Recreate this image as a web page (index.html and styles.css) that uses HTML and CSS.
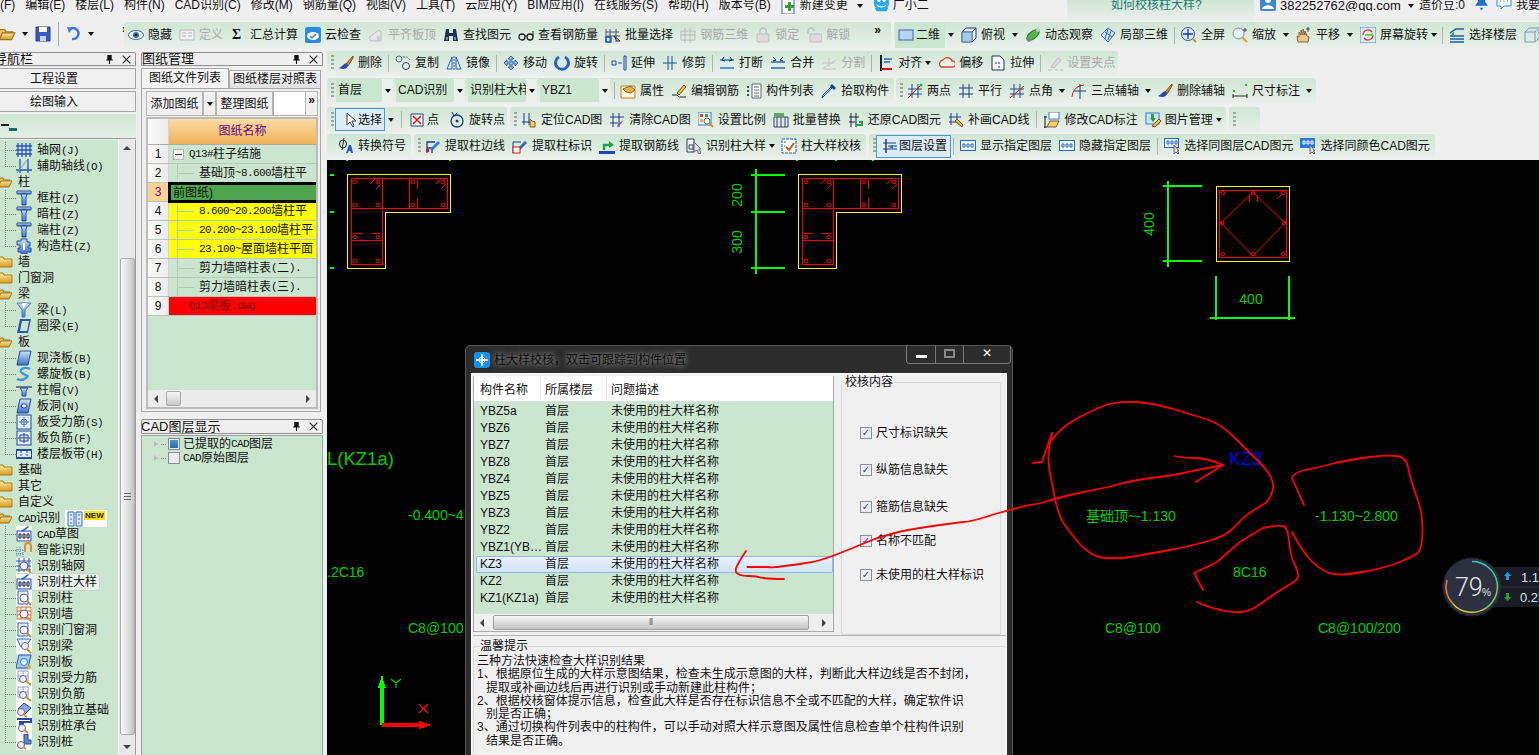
FILE: index.html
```html
<!DOCTYPE html>
<html lang="zh">
<head>
<meta charset="utf-8">
<title>柱大样校核</title>
<link rel="stylesheet" href="styles.css">
</head>
<body>
<svg class="defs" aria-hidden="true">
  <defs>
    <linearGradient id="gold" x1="0" y1="0" x2="0" y2="1"><stop offset="0" stop-color="#ffe9a8"/><stop offset="1" stop-color="#d79a22"/></linearGradient>
    <linearGradient id="steel" x1="0" y1="0" x2="0" y2="1"><stop offset="0" stop-color="#cfe0f8"/><stop offset="1" stop-color="#3c73c8"/></linearGradient>
  </defs>
  <symbol id="open" viewBox="0 0 16 16"><path d="M1 13V4h5l1 2h6v2" fill="#e8c060" stroke="#9a7420"/><path d="M1 13l3-6h11l-3 6z" fill="url(#gold)" stroke="#9a7420"/></symbol>
  <symbol id="shut" viewBox="0 0 16 16"><path d="M1 13V3h5l1 2h8v8z" fill="url(#gold)" stroke="#a87c20"/></symbol>
  <symbol id="save" viewBox="0 0 16 16"><path d="M1 1h14v14H1z" fill="#3a5cb8" stroke="#24408c"/><path d="M4 1h8v5H4z" fill="#fff"/><path d="M5 10h6v5H5z" fill="#c8d2e8"/></symbol>
  <symbol id="undo" viewBox="0 0 16 16"><path d="M4 3a5.500 5.500 0 1 1 2 10" fill="none" stroke="#3a78d8" stroke-width="2.500"/><path d="M1 1l6 1-4 5z" fill="#3a78d8"/></symbol>
  <symbol id="eye" viewBox="0 0 16 16"><ellipse cx="8" cy="8" rx="7.500" ry="4.500" fill="#eef2f6" stroke="#4a6078"/><circle cx="8" cy="8" r="3" fill="#3a6ea8"/><circle cx="8" cy="8" r="1.200" fill="#102030"/></symbol>
  <symbol id="def" viewBox="0 0 16 16"><path d="M1 3h14v10H1z" fill="#f0f0f0" stroke="#b8b8b8"/><path d="M3 6h4M3 9h4M9 6h4M9 9h4" stroke="#b8b8b8"/></symbol>
  <symbol id="cloud" viewBox="0 0 16 16"><rect x="0" y="0" width="16" height="16" rx="2" fill="#2a8ce0"/><ellipse cx="8" cy="9" rx="6" ry="4" fill="#fff"/><path d="M5 9l2 2 4-4" fill="none" stroke="#2a8ce0" stroke-width="1.500"/></symbol>
  <symbol id="level" viewBox="0 0 16 16"><path d="M1 10l10-7 2 2v9H3z" fill="#e4e4e4" stroke="#bcbcbc"/><path d="M9 9h5v5H9z" fill="#d0d0d0"/></symbol>
  <symbol id="binoc" viewBox="0 0 16 16"><path d="M3 2h3v4h4V2h3l2 12h-5V9H6v5H1z" fill="#1c3050"/><path d="M3 10h2v3H3zM11 10h2v3h-2z" fill="#6a90c0"/></symbol>
  <symbol id="glass" viewBox="0 0 16 16"><circle cx="4" cy="10" r="3" fill="none" stroke="#222" stroke-width="1.300"/><circle cx="12" cy="10" r="3" fill="none" stroke="#222" stroke-width="1.300"/><path d="M7 9h2M15 10V4" stroke="#222"/></symbol>
  <symbol id="batch" viewBox="0 0 16 16"><path d="M1 2v13M5 2v13M1 5h13M1 9h14M11 2v13" stroke="#556" fill="none"/><path d="M1 10h5v5H1z" fill="none" stroke="#1a48c8" stroke-width="1.300"/><path d="M9 9l6 5-3 0z" fill="#fff" stroke="#223"/></symbol>
  <symbol id="r3d" viewBox="0 0 16 16"><path d="M1 4h14v9H1zM5 1v15M10 1v15M1 8h14" stroke="#bcbcbc" fill="none"/></symbol>
  <symbol id="lock" viewBox="0 0 16 16"><path d="M5 7V4a3 3 0 0 1 6 0v3" fill="none" stroke="#c4c4c4" stroke-width="1.500"/><rect x="2" y="7" width="12" height="8" rx="1" fill="#dcdcdc" stroke="#c0c0c0"/></symbol>
  <symbol id="unlock" viewBox="0 0 16 16"><path d="M2 7V4a3 3 0 0 1 6 0" fill="none" stroke="#c4c4c4" stroke-width="1.500"/><rect x="4" y="7" width="12" height="8" rx="1" fill="#dcdcdc" stroke="#c0c0c0"/></symbol>
  <symbol id="plane" viewBox="0 0 16 16"><rect x="1" y="3" width="14" height="10" fill="#bcd4f4" stroke="#3a60a8"/></symbol>
  <symbol id="cube" viewBox="0 0 16 16"><path d="M1 5l4-4h10v10l-4 4H1z" fill="#dfeefa" stroke="#2a3a58"/><path d="M1 5h10v10M11 5l4-4" fill="none" stroke="#2a3a58"/><path d="M1 5h10v10H1z" fill="#6aa8d8" opacity=".5"/></symbol>
  <symbol id="orbit" viewBox="0 0 16 16"><ellipse cx="8" cy="8" rx="7.500" ry="3.500" transform="rotate(-38 8 8)" fill="#58b848" stroke="#2a7a28"/><circle cx="13" cy="3" r="2" fill="#c8c8d0"/><circle cx="4" cy="13" r="2" fill="#808890"/></symbol>
  <symbol id="part" viewBox="0 0 16 16"><path d="M1 8l7-7 7 5-7 9z" fill="#cfe2f8" stroke="#3a68b0"/><path d="M5 5l7 5M8 2l-3 10M11 4l-3 9" stroke="#3a68b0" fill="none"/></symbol>
  <symbol id="full" viewBox="0 0 16 16"><circle cx="7" cy="7" r="6.500" fill="#dbe6f6" stroke="#34507c"/><path d="M7 2v10M2 7h10" stroke="#1c3a90" stroke-width="1.300"/><path d="M12 12l3 3" stroke="#c89030" stroke-width="2"/></symbol>
  <symbol id="zoom" viewBox="0 0 16 16"><circle cx="6.500" cy="6.500" r="5.500" fill="#e8f0fa" stroke="#7a8aa0"/><path d="M10 10l5 5" stroke="#d8a040" stroke-width="2.200"/><path d="M13 1v4M11 3h4" stroke="#445"/></symbol>
  <symbol id="pan" viewBox="0 0 16 16"><path d="M2 15l-1-6 2 1V5l2 3V3l2 5V2l2 6V4l2 5 2 1-1 5z" fill="#e8c888" stroke="#806030"/><path d="M12 0v5M10 2h4" stroke="#445"/></symbol>
  <symbol id="turn" viewBox="0 0 16 16"><rect x="0" y="0" width="16" height="16" fill="#d8ecf8" stroke="#3a8ac8"/><path d="M3 8a5 5 0 0 1 9-3M13 8a5 5 0 0 1-9 3" fill="none" stroke="#e03020" stroke-width="1.300"/><path d="M5 7h6l2-2v4H5z" fill="#88c848"/></symbol>
  <symbol id="floors" viewBox="0 0 16 16"><path d="M1 6l6-4h8M1 9h14M1 12h14M1 15h14" stroke="#1c5ca0" stroke-width="1.500" fill="none"/><path d="M5 5l-3 2 3 2z" fill="#30a040"/></symbol>
  <symbol id="box" viewBox="0 0 16 16"><path d="M1 5l4-4h10v10l-4 4H1zM1 5h10v10M11 5l4-4" fill="none" stroke="#7a98c0"/></symbol>
  <symbol id="brush" viewBox="0 0 16 16"><path d="M15 1L8 9l2 2 5-8z" fill="#d08a28" stroke="#805010"/><path d="M9 8c-3 0-4 3-8 5 4 2 8 1 9-2z" fill="#2a4ea8"/></symbol>
  <symbol id="copy" viewBox="0 0 16 16"><circle cx="4" cy="4" r="3" fill="none" stroke="#567"/><circle cx="11" cy="11" r="3.500" fill="none" stroke="#345"/><path d="M8 2h4l3 3" stroke="#567" stroke-dasharray="2 1" fill="none"/></symbol>
  <symbol id="mirror" viewBox="0 0 16 16"><path d="M1 14L6 2v12zM15 14L10 2v12z" fill="#dbe8f8" stroke="#2a5aa8"/><path d="M8 1v14" stroke="#2a5aa8" stroke-dasharray="2 1"/></symbol>
  <symbol id="move" viewBox="0 0 16 16"><path d="M8 1l3 3H9v3h3V5l3 3-3 3V9H9v3h2l-3 3-3-3h2V9H4v2L1 8l3-3v2h3V4H5z" fill="#8ab0e0" stroke="#2a4a88" stroke-width=".7"/></symbol>
  <symbol id="rot" viewBox="0 0 16 16"><path d="M5 2a6.500 6.500 0 1 0 6 0" fill="none" stroke="#2a62c8" stroke-width="3"/></symbol>
  <symbol id="extend" viewBox="0 0 16 16"><path d="M1 6h4v4H1zM7 8h4M13 1h2v14h-2z" fill="none" stroke="#1c4a98"/></symbol>
  <symbol id="trim" viewBox="0 0 16 16"><path d="M1 8h14M6 1v14M10 1v14" stroke="#1c4a98" fill="none"/></symbol>
  <symbol id="cut" viewBox="0 0 16 16"><path d="M1 5h14M1 13h14" stroke="#2a78c8" stroke-width="1.300"/><path d="M5 2l-2 3 3 1M11 2l2 3-3 1" fill="none" stroke="#123"/></symbol>
  <symbol id="join" viewBox="0 0 16 16"><path d="M1 7h14M1 13h14" stroke="#2a68b8" stroke-width="1.300"/><path d="M3 2l3 3-3 1M13 2l-3 3 3 1" fill="none" stroke="#123"/></symbol>
  <symbol id="split" viewBox="0 0 16 16"><path d="M1 14L15 5M3 14h12M8 3v9M1 8h12" stroke="#c4c4c4" fill="none"/></symbol>
  <symbol id="align" viewBox="0 0 16 16"><path d="M3 0v16" stroke="#123" stroke-width="2"/><path d="M3 14h11" stroke="#d01818" stroke-width="2"/><path d="M6 4h8M6 7h6" stroke="#2a68b8" stroke-width="1.500"/></symbol>
  <symbol id="offset" viewBox="0 0 16 16"><path d="M2 12a4 4 0 0 1 2-7 5 5 0 0 1 9 1 3 3 0 0 1 1 6z" fill="#fff0e8" stroke="#c84a3a" stroke-width="1.300"/></symbol>
  <symbol id="stretch" viewBox="0 0 16 16"><path d="M2 1h8l4 4v10H2z" fill="#f4f8fc" stroke="#234"/><path d="M9 7v2M9 11v2M5 8h2" stroke="#234"/></symbol>
  <symbol id="grippt" viewBox="0 0 16 16"><path d="M4 12L11 3l3 2-7 8z" fill="#ddd" stroke="#bbb"/><path d="M1 15h4M8 15h3M13 15h3" stroke="#bbb"/></symbol>
  <symbol id="props" viewBox="0 0 16 16"><path d="M1 3h14v12H1z" fill="#fff6e4" stroke="#d07a20"/><path d="M3 6l7-3 5 4-4 3-5-1z" fill="#e8b050" stroke="#806020"/></symbol>
  <symbol id="pencil" viewBox="0 0 16 16"><path d="M6 10l7-8 2 2-7 8z" fill="#eabf50" stroke="#705010"/><path d="M1 12h5l2 2h7" stroke="#223" fill="none"/></symbol>
  <symbol id="list" viewBox="0 0 16 16"><path d="M6 1h9v14H6z" fill="#fff" stroke="#567"/><path d="M8 4h5M8 7h5M8 10h5M8 13h5" stroke="#567"/><path d="M1 3h2v2H1zM1 7h2v2H1zM1 11h2v2H1z" fill="#345"/></symbol>
  <symbol id="picker" viewBox="0 0 16 16"><path d="M11 5l-8 8-2 2 1-3 8-8z" fill="#c8dcf8" stroke="#1c4aa0"/><path d="M9 3l2-2 4 4-2 2z" fill="#1c3c80"/></symbol>
  <symbol id="two" viewBox="0 0 16 16"><path d="M5 1v14M11 1v14M1 6h14M1 11h14" stroke="#1c4a88" fill="none"/><path d="M1 15L15 1" stroke="#d01818"/><circle cx="14" cy="2" r="1.500" fill="#30b030"/></symbol>
  <symbol id="para" viewBox="0 0 16 16"><path d="M5 1v14M11 1v14M1 5h14M1 11h14" stroke="#1c3a80" fill="none"/></symbol>
  <symbol id="angle" viewBox="0 0 16 16"><path d="M5 1v14M11 1v14M1 6h14M1 11h14" stroke="#1c4a88" fill="none"/><path d="M1 15L15 3" stroke="#d01818"/></symbol>
  <symbol id="arc" viewBox="0 0 16 16"><path d="M1 14A12 12 0 0 1 13 2" fill="none" stroke="#d01818"/><path d="M9 1v15M3 8h12" stroke="#1c3a80"/></symbol>
  <symbol id="dim" viewBox="0 0 16 16"><path d="M1 11v4M15 11v4M1 13h14" stroke="#223" fill="none"/><rect x="1" y="7" width="2" height="2" fill="#30b030"/><rect x="13" y="1" width="2" height="2" fill="#30b030"/></symbol>
  <symbol id="arrow" viewBox="0 0 16 16"><path d="M6 1v12l3-3 3 5 1-1-2-5h4z" fill="#fff" stroke="#345"/></symbol>
  <symbol id="xpt" viewBox="0 0 16 16"><path d="M2 2h12v12H2z" fill="#fff" stroke="#1c3a88"/><path d="M4 4l8 8M12 4l-8 8" stroke="#d01818" stroke-width="1.500"/></symbol>
  <symbol id="rotpt" viewBox="0 0 16 16"><circle cx="8" cy="9" r="6" fill="none" stroke="#1c3a80" stroke-width="1.300"/><circle cx="8" cy="9" r="1.500" fill="#1c3a80"/><path d="M3 0l2 4 3-3" fill="none" stroke="#1c3a80"/></symbol>
  <symbol id="locate" viewBox="0 0 16 16"><path d="M3 1v12M1 10h13M8 1v12" stroke="#1c3a88" fill="none"/><path d="M9 15V7l2 2 3 1v5z" fill="#f0d060" stroke="#806020"/></symbol>
  <symbol id="clear" viewBox="0 0 16 16"><path d="M4 1v14M10 1v14M1 5h14M1 11h8" stroke="#1c3a88" fill="none"/><path d="M15 8l-5 6-2 1 1-3z" fill="#a040a0"/></symbol>
  <symbol id="ratio" viewBox="0 0 16 16"><rect x="0" y="0" width="13" height="13" fill="#e4f0fc" stroke="#3a78c8"/><rect x="2" y="2" width="3" height="3" fill="#e04030"/><rect x="7" y="2" width="3" height="3" fill="#40a040"/><rect x="2" y="7" width="3" height="3" fill="#e8b030"/><circle cx="9" cy="9" r="3" fill="#fff" stroke="#667"/><path d="M11 11l4 4" stroke="#c89030" stroke-width="2"/></symbol>
  <symbol id="swap" viewBox="0 0 16 16"><path d="M1 5h14v10H1z" fill="#dfe8f0" stroke="#345"/><path d="M4 5v10M8 5v10M12 5v10" stroke="#345"/><path d="M1 1h10v4H1z" fill="#58a868"/></symbol>
  <symbol id="restore" viewBox="0 0 16 16"><path d="M3 1v14M8 1v14M1 5h10M1 10h6" stroke="#123" fill="none"/><path d="M8 13h6v-3l-3 0" fill="none" stroke="#20a040" stroke-width="2"/></symbol>
  <symbol id="draw" viewBox="0 0 16 16"><path d="M3 1v12M9 1v8M1 5h12M1 10h8" stroke="#1c3a88" fill="none"/><path d="M7 9l2-2 6 6-1 2z" fill="#e8b050" stroke="#805010"/></symbol>
  <symbol id="editcad" viewBox="0 0 16 16"><path d="M1 4v12M0 5h3M0 15h3" stroke="#123"/><path d="M3 15l3-6h9l-3 6z" fill="#f0d070" stroke="#806020"/><rect x="5" y="0" width="10" height="7" fill="#fff" stroke="#3a78c8"/></symbol>
  <symbol id="pic" viewBox="0 0 16 16"><rect x="1" y="1" width="13" height="11" fill="#cfe4fa" stroke="#3a78c8"/><path d="M6 2h3v4h2l-3 4-3-4h1z" fill="#30a030"/><path d="M7 14l7-7 2 2-6 6z" fill="#e8c050" stroke="#705010"/></symbol>
  <symbol id="phi" viewBox="0 0 16 16"><ellipse cx="5" cy="6" rx="3.500" ry="4" fill="none" stroke="#223"/><path d="M6 0L4 12" stroke="#223"/><path d="M8 15l3-8h2l2 8h-2l-.5-2h-2l-.5 2z" fill="#1c5ac8"/></symbol>
  <symbol id="edge" viewBox="0 0 16 16"><path d="M2 15V4h8M2 10h5v5" fill="none" stroke="#1c3a88" stroke-width="1.300"/><path d="M5 11l8-8 2 2-8 8z" fill="#3a78d8"/><rect x="1" y="11" width="3" height="3" fill="#d01818"/></symbol>
  <symbol id="mark" viewBox="0 0 16 16"><path d="M1 15V4h8" fill="none" stroke="#1c3a88"/><path d="M5 11l8-8 2 2-8 8z" fill="#2a68c8"/><rect x="1" y="9" width="7" height="6" fill="#fff" stroke="#d01818"/></symbol>
  <symbol id="bar" viewBox="0 0 16 16"><path d="M0 13h16v3H0z" fill="#1c48b8"/><path d="M5 12V7h7" fill="none" stroke="#20a040" stroke-width="2.500"/><path d="M10 3l5 4-5 3z" fill="#20a040"/></symbol>
  <symbol id="detail" viewBox="0 0 16 16"><path d="M1 1h7v13H1z" fill="#fff" stroke="#1c3a88"/><path d="M3 7h4v4H3z" fill="none" stroke="#1c3a88"/><path d="M8 4v10l3-2 2 4 2-1-2-4h2z" fill="#ddd" stroke="#667"/></symbol>
  <symbol id="check" viewBox="0 0 16 16"><path d="M1 1h14v14H1z" fill="#fff" stroke="#1c58a8" stroke-dasharray="3 1"/><path d="M5 9l3 3 5-7" fill="none" stroke="#c85a20" stroke-width="2"/><path d="M3 4h2M3 8h1" stroke="#1c58a8"/></symbol>
  <symbol id="layers" viewBox="0 0 16 16"><path d="M4 1v14" stroke="#123" stroke-width="1.300"/><path d="M1 5h5l8 0M1 11h14M6 8h9" stroke="#1c3a88"/><path d="M11 7l-4 2 4 2z" fill="#2a68c8"/></symbol>
  <symbol id="cad" viewBox="0 0 16 16"><rect x=".5" y="2.500" width="15" height="10" fill="#eef5fc" stroke="#2a68b8"/><path d="M3 6h2v3H3zM7 6h2v3H7zM11 6h2v3h-2z" fill="none" stroke="#2a68b8"/></symbol>
  <symbol id="cadsel" viewBox="0 0 16 16"><rect x=".5" y=".5" width="14" height="9" fill="#eef5fc" stroke="#2a68b8"/><path d="M3 3h2v3H3zM7 3h2v3H7zM11 3h2v3h-2z" fill="none" stroke="#2a68b8"/><path d="M10 7v9l2-2 2 2 1-1-2-2h2z" fill="#ddd" stroke="#667"/></symbol>
  <symbol id="cadcol" viewBox="0 0 16 16"><rect x="0" y="0" width="15" height="10" fill="#2a78d8"/><path d="M3 3h2v3H3zM7 3h2v3H7zM11 3h2v3h-2z" fill="none" stroke="#fff"/><path d="M10 7v9l2-2 2 2 1-1-2-2h2z" fill="#ddd" stroke="#667"/></symbol>
  <symbol id="grid" viewBox="0 0 16 16"><path d="M2 1v14M6 1v14M10 1v14M14 1v14M0 4h16M0 8h16M0 12h16" stroke="#2a50b8" stroke-width="1.300"/></symbol>
  <symbol id="aux" viewBox="0 0 16 16"><path d="M4 1v14M12 1v14M0 12h16" stroke="#2a50b8" stroke-width="1.300"/><path d="M1 15L11 2" stroke="#7a9ad8"/></symbol>
  <symbol id="col" viewBox="0 0 16 16"><path d="M1 1h14v3H1z" fill="url(#steel)" stroke="#244a98"/><path d="M5 4h6l-1 3v8H6V7z" fill="url(#steel)" stroke="#244a98"/></symbol>
  <symbol id="gear" viewBox="0 0 16 16"><path d="M5 1h6v3h3v4h-2v2h3v4h-4v2H5v-2H2v-4h2V7H1V3h4z" fill="url(#steel)" stroke="#244a98"/><path d="M7 5h2v7H7z" fill="#fff"/></symbol>
  <symbol id="beam" viewBox="0 0 16 16"><path d="M1 1h14L9 8v7H6V8z" fill="url(#steel)" stroke="#4a7ac0"/><path d="M6 1l5 0-4 6" fill="#fff"/></symbol>
  <symbol id="ring" viewBox="0 0 16 16"><path d="M4 1h11l-3 14H1z" fill="#2a58b0"/><path d="M6 3h7l-2 10H4z" fill="#cbe6ce"/></symbol>
  <symbol id="slab" viewBox="0 0 16 16"><path d="M4 1h11l-3 14H1z" fill="url(#steel)" stroke="#244a98"/></symbol>
  <symbol id="spiral" viewBox="0 0 16 16"><path d="M14 3C8 0 2 4 6 7s8 2 4 5-7 2-9 1" fill="none" stroke="#4a90e0" stroke-width="2.400"/></symbol>
  <symbol id="cap" viewBox="0 0 16 16"><path d="M0 4h16v2H0z" fill="#6a7a90"/><path d="M4 6h8l-2 3v5H6V9z" fill="url(#steel)" stroke="#244a98"/></symbol>
  <symbol id="hole" viewBox="0 0 16 16"><path d="M4 1h11l-3 14H1z" fill="url(#steel)" stroke="#244a98"/><ellipse cx="8" cy="8" rx="3" ry="2" fill="#fff" stroke="#244a98"/></symbol>
  <symbol id="reb" viewBox="0 0 16 16"><rect x="1" y="1" width="14" height="14" fill="#dfeafa" stroke="#244a98"/><path d="M8 3v10M3 8h10" stroke="#4a7ac0"/><circle cx="8" cy="8" r="3" fill="none" stroke="#4a7ac0"/></symbol>
  <symbol id="neg" viewBox="0 0 16 16"><rect x="1" y="1" width="14" height="14" fill="#dfeafa" stroke="#244a98"/><path d="M4 5h8v6H4zM8 3v10M2 8h12" fill="none" stroke="#244a98"/></symbol>
  <symbol id="band" viewBox="0 0 16 16"><path d="M0 3h16v10H0z" fill="#244a98"/><path d="M1 5h14v6H1z" fill="#dfeafa"/><path d="M5 5v6M11 5v6" stroke="#244a98" stroke-dasharray="2 1"/></symbol>
  <symbol id="cadt" viewBox="0 0 16 16"><rect width="16" height="16" fill="#fff"/><rect x="1" y="5" width="14" height="10" fill="#eef" stroke="#244a98"/><path d="M3 8h2v4H3zM7 8h2v4H7zM11 8h2v4h-2z" fill="none" stroke="#123"/><path d="M5 5l7-5 1 1-6 5z" fill="#2a68c8"/></symbol>
  <symbol id="smart" viewBox="0 0 16 16"><path d="M1 5v10M4 5v10M7 8v7M0 8h8M0 12h8" stroke="#4a80d0" stroke-dasharray="1 1"/><path d="M9 10V4a3 3 0 0 1 6 0v6" fill="none" stroke="#e09030" stroke-width="2"/></symbol>
  <symbol id="sgrid" viewBox="0 0 16 16"><rect width="16" height="16" fill="#fff"/><path d="M3 0v14M8 0v14M13 0v14M0 3h15M0 8h15M0 12h15" stroke="#2a50b8"/><circle cx="8" cy="8" r="4" fill="#e4ecf4" stroke="#667"/><path d="M11 11l4 4" stroke="#d09030" stroke-width="2"/></symbol>
  <symbol id="scol" viewBox="0 0 16 16"><rect width="16" height="16" fill="#fff"/><path d="M2 1h10v13H2z" fill="#dfeafa" stroke="#3a68b8"/><circle cx="8" cy="8" r="4" fill="#f4f4f8" stroke="#667"/><path d="M11 11l4 4" stroke="#d09030" stroke-width="2"/></symbol>
  <symbol id="swall" viewBox="0 0 16 16"><rect width="16" height="16" fill="#fff"/><path d="M1 1h14v12H1zM1 5h14M1 9h14M5 1v12M10 1v12" fill="#fbeee4" stroke="#d07040"/><circle cx="8" cy="8" r="4" fill="#f4f4f8" stroke="#667"/><path d="M11 11l4 4" stroke="#d09030" stroke-width="2"/></symbol>
  <symbol id="sbeam" viewBox="0 0 16 16"><rect width="16" height="16" fill="#fff"/><path d="M1 1h14L9 9H5z" fill="#dfeafa" stroke="#3a68b8"/><circle cx="9" cy="8" r="3.500" fill="#f4f4f8" stroke="#667"/><path d="M11 11l4 4" stroke="#d09030" stroke-width="2"/></symbol>
  <symbol id="sslab" viewBox="0 0 16 16"><path d="M3 1h12l-3 13H0z" fill="#a8c8f0" stroke="#2a58b0"/><circle cx="8" cy="8" r="3.500" fill="#d8f0f8" stroke="#2a88b8"/><circle cx="13" cy="13" r="2" fill="#e8a830"/></symbol>
  <symbol id="sreb" viewBox="0 0 16 16"><rect width="16" height="16" fill="#fff"/><path d="M2 1h10v10H2zM7 1v10M2 6h10" fill="none" stroke="#8aa0c8"/><circle cx="7" cy="9" r="3.500" fill="#eef" stroke="#667"/><path d="M10 11l5 4" stroke="#d09030" stroke-width="2"/></symbol>
  <symbol id="sbase" viewBox="0 0 16 16"><rect width="16" height="16" fill="#fff"/><path d="M2 7l6-6 7 5-7 7z" fill="#88a8e0" stroke="#244a98"/><circle cx="5" cy="10" r="3.500" fill="#eef" stroke="#667"/><path d="M7 12l4 3" stroke="#d09030" stroke-width="2"/></symbol>
  <symbol id="spile" viewBox="0 0 16 16"><rect width="16" height="16" fill="#fff"/><path d="M1 1h14v3H4v2h4" fill="none" stroke="#244a98" stroke-width="2"/><circle cx="6" cy="10" r="3.500" fill="#eef" stroke="#667"/><path d="M8 12l4 3" stroke="#d09030" stroke-width="2"/></symbol>
  <symbol id="sstake" viewBox="0 0 16 16"><rect width="16" height="16" fill="#fff"/><path d="M8 0h4v6h3v4H8z" fill="#5a88d0" stroke="#244a98"/><circle cx="5" cy="11" r="3.500" fill="#eef" stroke="#667"/><path d="M7 13l3 2" stroke="#d09030" stroke-width="2"/></symbol>
  <symbol id="colsym" viewBox="0 0 16 16"><path d="M1 1h6v14H1zM9 1h6v14H9z" fill="#dfeafa" stroke="#2a68c8"/><path d="M3 4h2M3 8h2M3 12h2M11 4h2M11 8h2M11 12h2" stroke="#2a68c8"/></symbol>
  <symbol id="pin" viewBox="0 0 10 10"><path d="M3 1h4v4h1v1H5.500v3h-1V6H2V5h1z" fill="#111"/></symbol>
  <symbol id="cross" viewBox="0 0 10 10"><path d="M1.500 1.500l7 7M8.500 1.500l-7 7" stroke="#222" fill="none"/></symbol>
  <symbol id="qq" viewBox="0 0 20 20"><circle cx="10" cy="9" r="9" fill="#28a8f0"/><ellipse cx="7" cy="6" rx="2" ry="2.500" fill="#fff"/><ellipse cx="13" cy="6" rx="2" ry="2.500" fill="#fff"/><path d="M4 11c3 3 9 3 12 0-1 5-11 5-12 0z" fill="#fff"/><path d="M2 15h16l-2 4H4z" fill="#28a8f0"/></symbol>
  <symbol id="newdoc" viewBox="0 0 16 16"><path d="M1 0h12v16H1z" fill="#fff" stroke="#3a68b8"/><path d="M7 4h3v3h3v3h-3v3H7v-3H4V7h3z" fill="#30a030"/></symbol>
  <symbol id="user" viewBox="0 0 16 16"><rect width="16" height="16" rx="2" fill="#3a88d0"/><circle cx="8" cy="5" r="3" fill="#fff"/><path d="M2 14c1-5 11-5 12 0z" fill="#fff"/></symbol>
  <symbol id="bell" viewBox="0 0 14 16"><path d="M7 0c4 0 4 4 4 7l3 4H0l3-4c0-3 0-7 4-7z" fill="#1f6fd0"/><path d="M5 13h4l-2 3z" fill="#1f6fd0"/></symbol>
  <symbol id="chat" viewBox="0 0 16 16"><path d="M1 1h14v10H8l-3 3v-3H1z" fill="#fff" stroke="#2a88d8"/><path d="M4 6h1M7.500 6h1M11 6h1" stroke="#2a88d8"/></symbol>
  <symbol id="app" viewBox="0 0 16 16"><rect width="16" height="16" rx="3" fill="#1890f0"/><path d="M8 2v12M2 8h12" stroke="#fff" stroke-width="1.500"/><circle cx="8" cy="8" r="3" fill="none" stroke="#fff"/></symbol>
</svg>

<div class="app">
  <header class="menubar">
    <span class="first">文件(F)</span><span>编辑(E)</span><span>楼层(L)</span><span>构件(N)</span><span>CAD识别(C)</span><span>修改(M)</span><span>钢筋量(Q)</span><span>视图(V)</span><span>工具(T)</span><span>云应用(Y)</span><span>BIM应用(I)</span><span>在线服务(S)</span><span>帮助(H)</span><span>版本号(B)</span>
    <span class="it mi"><svg class="i"><use href="#newdoc"/></svg>新建变更<i class="caret"></i></span>
    <span class="it mi"><svg class="i qq"><use href="#qq"/></svg>广小二</span>
    <span class="hint">如何校核柱大样?</span>
    <div class="account">
      <svg class="i"><use href="#user"/></svg><span class="mail">382252762@qq.com</span><i class="caret"></i>
      <span class="beans">造价豆:0</span>
      <svg class="i bell"><use href="#bell"/></svg><svg class="i"><use href="#chat"/></svg><span class="ask">我要</span>
    </div>
  </header>

  <div class="topbar">
    <div class="quick">
      <svg class="i wide"><use href="#open"/></svg><i class="caret"></i>
      <svg class="i"><use href="#save"/></svg>
      <b class="sep tall"></b>
      <svg class="i"><use href="#undo"/></svg><i class="caret"></i>
      <span class="more">»</span>
    </div>
    <div class="bar top1">
      <span class="it"><svg class="i"><use href="#eye"/></svg>隐藏</span>
      <span class="it dis"><svg class="i"><use href="#def"/></svg>定义</span>
      <span class="it sig"><span class="sigma">Σ</span>汇总计算</span>
      <span class="it"><svg class="i"><use href="#cloud"/></svg>云检查</span>
      <span class="it dis"><svg class="i"><use href="#level"/></svg>平齐板顶</span>
      <span class="it"><svg class="i"><use href="#binoc"/></svg>查找图元</span>
      <span class="it"><svg class="i"><use href="#glass"/></svg>查看钢筋量</span>
      <span class="it"><svg class="i"><use href="#batch"/></svg>批量选择</span>
      <span class="it dis"><svg class="i"><use href="#r3d"/></svg>钢筋三维</span>
      <span class="it dis"><svg class="i"><use href="#lock"/></svg>锁定</span>
      <span class="it dis"><svg class="i"><use href="#unlock"/></svg>解锁</span>
      <span class="more push">»</span>
    </div>
    <div class="bar top2">
      <span class="it on2d"><svg class="i"><use href="#plane"/></svg>二维</span><i class="caret"></i>
      <span class="it"><svg class="i"><use href="#cube"/></svg>俯视</span><i class="caret"></i>
      <span class="it"><svg class="i"><use href="#orbit"/></svg>动态观察</span>
      <span class="it"><svg class="i"><use href="#part"/></svg>局部三维</span>
      <b class="sep"></b>
      <span class="it"><svg class="i"><use href="#full"/></svg>全屏</span>
      <span class="it"><svg class="i"><use href="#zoom"/></svg>缩放</span><i class="caret"></i>
      <span class="it"><svg class="i"><use href="#pan"/></svg>平移</span><i class="caret"></i>
      <span class="it"><svg class="i"><use href="#turn"/></svg>屏幕旋转</span><i class="caret tight"></i>
      <b class="sep"></b>
      <span class="it"><svg class="i"><use href="#floors"/></svg>选择楼层</span>
      <svg class="i"><use href="#box"/></svg>
    </div>
  </div>

  <main class="main">
    <aside class="nav">
      <div class="title"><span class="cut">导航栏</span><svg class="tb-i"><use href="#pin"/></svg><svg class="tb-i"><use href="#cross"/></svg></div>
      <div class="navbtn">工程设置</div>
      <div class="navbtn">绘图输入</div>
      <div class="treetool"><b class="d1"></b><b class="d2"></b></div>
      <div class="treewrap">
        <div class="tree">
          <div class="branch">
            <div class="leaf"><span class="node"><svg class="i"><use href="#grid"/></svg><span>轴网<em>(J)</em></span></span></div>
            <div class="leaf"><span class="node"><svg class="i"><use href="#aux"/></svg><span>辅助轴线<em>(O)</em></span></span></div>
          </div>
          <div class="fold"><svg class="i"><use href="#open"/></svg>柱</div>
          <div class="branch">
            <div class="leaf"><span class="node"><svg class="i"><use href="#col"/></svg><span>框柱<em>(Z)</em></span></span></div>
            <div class="leaf"><span class="node"><svg class="i"><use href="#col"/></svg><span>暗柱<em>(Z)</em></span></span></div>
            <div class="leaf"><span class="node"><svg class="i"><use href="#col"/></svg><span>端柱<em>(Z)</em></span></span></div>
            <div class="leaf"><span class="node"><svg class="i"><use href="#gear"/></svg><span>构造柱<em>(Z)</em></span></span></div>
          </div>
          <div class="fold"><svg class="i"><use href="#shut"/></svg>墙</div>
          <div class="fold"><svg class="i"><use href="#shut"/></svg>门窗洞</div>
          <div class="fold"><svg class="i"><use href="#open"/></svg>梁</div>
          <div class="branch">
            <div class="leaf"><span class="node"><svg class="i"><use href="#beam"/></svg><span>梁<em>(L)</em></span></span></div>
            <div class="leaf"><span class="node"><svg class="i"><use href="#ring"/></svg><span>圈梁<em>(E)</em></span></span></div>
          </div>
          <div class="fold"><svg class="i"><use href="#open"/></svg>板</div>
          <div class="branch">
            <div class="leaf"><span class="node"><svg class="i"><use href="#slab"/></svg><span>现浇板<em>(B)</em></span></span></div>
            <div class="leaf"><span class="node"><svg class="i"><use href="#spiral"/></svg><span>螺旋板<em>(B)</em></span></span></div>
            <div class="leaf"><span class="node"><svg class="i"><use href="#cap"/></svg><span>柱帽<em>(V)</em></span></span></div>
            <div class="leaf"><span class="node"><svg class="i"><use href="#hole"/></svg><span>板洞<em>(N)</em></span></span></div>
            <div class="leaf"><span class="node"><svg class="i"><use href="#reb"/></svg><span>板受力筋<em>(S)</em></span></span></div>
            <div class="leaf"><span class="node"><svg class="i"><use href="#neg"/></svg><span>板负筋<em>(F)</em></span></span></div>
            <div class="leaf"><span class="node"><svg class="i"><use href="#band"/></svg><span>楼层板带<em>(H)</em></span></span></div>
          </div>
          <div class="fold"><svg class="i"><use href="#shut"/></svg>基础</div>
          <div class="fold"><svg class="i"><use href="#shut"/></svg>其它</div>
          <div class="fold"><svg class="i"><use href="#shut"/></svg>自定义</div>
          <div class="fold"><svg class="i"><use href="#open"/></svg><span><em>CAD</em>识别</span><span class="newtag"><svg class="i"><use href="#colsym"/></svg><strong>NEW</strong></span></div>
          <div class="branch">
            <div class="leaf"><span class="node"><svg class="i"><use href="#cadt"/></svg><span><em>CAD</em>草图</span></span></div>
            <div class="leaf"><span class="node"><svg class="i"><use href="#smart"/></svg><span>智能识别</span></span></div>
            <div class="leaf"><span class="node"><svg class="i"><use href="#sgrid"/></svg><span>识别轴网</span></span></div>
            <div class="leaf hl"><span class="node"><svg class="i"><use href="#cadt"/></svg><span>识别柱大样</span></span></div>
            <div class="leaf"><span class="node"><svg class="i"><use href="#scol"/></svg><span>识别柱</span></span></div>
            <div class="leaf"><span class="node"><svg class="i"><use href="#swall"/></svg><span>识别墙</span></span></div>
            <div class="leaf"><span class="node"><svg class="i"><use href="#scol"/></svg><span>识别门窗洞</span></span></div>
            <div class="leaf"><span class="node"><svg class="i"><use href="#sbeam"/></svg><span>识别梁</span></span></div>
            <div class="leaf"><span class="node"><svg class="i"><use href="#sslab"/></svg><span>识别板</span></span></div>
            <div class="leaf"><span class="node"><svg class="i"><use href="#sreb"/></svg><span>识别受力筋</span></span></div>
            <div class="leaf"><span class="node"><svg class="i"><use href="#sreb"/></svg><span>识别负筋</span></span></div>
            <div class="leaf"><span class="node"><svg class="i"><use href="#sbase"/></svg><span>识别独立基础</span></span></div>
            <div class="leaf"><span class="node"><svg class="i"><use href="#spile"/></svg><span>识别桩承台</span></span></div>
            <div class="leaf"><span class="node"><svg class="i"><use href="#sstake"/></svg><span>识别桩</span></span></div>
          </div>
        </div>
        <div class="vscroll">
          <i class="up"></i>
          <div class="vthumb"><b></b></div>
          <i class="down"></i>
        </div>
      </div>
    </aside>

    <section class="draw">
      <div class="title"><span>图纸管理</span><svg class="tb-i"><use href="#pin"/></svg><svg class="tb-i"><use href="#cross"/></svg></div>
      <div class="tabs"><span class="tab active">图纸文件列表</span><span class="tab">图纸楼层对照表</span></div>
      <div class="tabbody">
        <div class="sheettools"><span class="stb w57">添加图纸</span><span class="stb w11"><i class="caret"></i></span><span class="stb w57">整理图纸</span><span class="more sm">»</span></div>
        <div class="sheet">
          <div class="shead"><span class="rh"></span><span class="hc">图纸名称</span></div>
          <div class="srow"><span class="rh">1</span><span class="cell"><i class="minus"></i><span class="mono">Q13#</span>柱子结施</span></div>
          <div class="srow"><span class="rh">2</span><span class="cell kid">基础顶<span class="mono">~8.600</span>墙柱平</span></div>
          <div class="srow cur"><span class="rh">3</span><span class="cell sel">前图纸)</span></div>
          <div class="srow"><span class="rh">4</span><span class="cell kid yel"><span class="mono">8.600~20.200</span>墙柱平</span></div>
          <div class="srow"><span class="rh">5</span><span class="cell kid yel"><span class="mono">20.200~23.100</span>墙柱平</span></div>
          <div class="srow"><span class="rh">6</span><span class="cell kid yel"><span class="mono">23.100~</span>屋面墙柱平面</span></div>
          <div class="srow"><span class="rh">7</span><span class="cell kid">剪力墙暗柱表<span class="mono">(</span>二<span class="mono">).</span></span></div>
          <div class="srow"><span class="rh">8</span><span class="cell kid">剪力墙暗柱表<span class="mono">(</span>三<span class="mono">).</span></span></div>
          <div class="srow"><span class="rh">9</span><span class="cell red"><span class="mono">Q13</span>梁板<span class="mono">.dwg</span></span></div>
          <div class="sempty"></div>
          <div class="hscroll"><i class="left"></i><b class="sthumb"></b><i class="right"></i></div>
        </div>
      </div>
      <div class="title t2"><span>CAD图层显示</span><svg class="tb-i"><use href="#pin"/></svg><svg class="tb-i"><use href="#cross"/></svg></div>
      <div class="layers">
        <div class="lrow"><i class="tri"></i><i class="dots"></i><i class="lb fill"></i>已提取的<span class="mono">CAD</span>图层</div>
        <div class="lrow"><i class="tri"></i><i class="dots"></i><i class="lb"></i><span class="mono">CAD</span>原始图层</div>
      </div>
    </section>

    <section class="work">
      <div class="ribbon">
        <div class="rrow r1">
          <div class="bar">
            <b class="grip"></b>
            <span class="it"><svg class="i"><use href="#brush"/></svg>删除</span><b class="sep"></b>
            <span class="it"><svg class="i"><use href="#copy"/></svg>复制</span>
            <span class="it"><svg class="i"><use href="#mirror"/></svg>镜像</span><b class="sep"></b>
            <span class="it"><svg class="i"><use href="#move"/></svg>移动</span>
            <span class="it"><svg class="i"><use href="#rot"/></svg>旋转</span><b class="sep"></b>
            <span class="it"><svg class="i"><use href="#extend"/></svg>延伸</span>
            <span class="it"><svg class="i"><use href="#trim"/></svg>修剪</span><b class="sep"></b>
            <span class="it"><svg class="i"><use href="#cut"/></svg>打断</span>
            <span class="it"><svg class="i"><use href="#join"/></svg>合并</span>
            <span class="it dis"><svg class="i"><use href="#split"/></svg>分割</span><b class="sep"></b>
            <span class="it"><svg class="i"><use href="#align"/></svg>对齐</span><i class="caret tight"></i>
            <span class="it"><svg class="i"><use href="#offset"/></svg>偏移</span>
            <span class="it"><svg class="i"><use href="#stretch"/></svg>拉伸</span><b class="sep"></b>
            <span class="it dis"><svg class="i"><use href="#grippt"/></svg>设置夹点</span>
          </div>
        </div>
        <div class="rrow r2">
          <div class="bar combos">
            <b class="grip"></b>
            <span class="combo c46"><span>首层</span><i class="drop"><i class="caret"></i></i></span>
            <span class="combo c59"><span>CAD识别</span><i class="drop"><i class="caret"></i></i></span>
            <span class="combo c69"><span class="clip">识别柱大样</span><i class="drop"><i class="caret"></i></i></span>
            <span class="combo c58"><span>YBZ1</span><i class="drop"><i class="caret"></i></i></span>
            <b class="sep"></b>
            <span class="it"><svg class="i"><use href="#props"/></svg>属性</span>
            <span class="it"><svg class="i"><use href="#pencil"/></svg>编辑钢筋</span>
            <span class="it"><svg class="i"><use href="#list"/></svg>构件列表</span>
            <span class="it"><svg class="i"><use href="#picker"/></svg>拾取构件</span>
          </div>
          <div class="bar">
            <b class="grip"></b>
            <span class="it"><svg class="i"><use href="#two"/></svg>两点</span>
            <span class="it"><svg class="i"><use href="#para"/></svg>平行</span>
            <span class="it"><svg class="i"><use href="#angle"/></svg>点角</span><i class="caret"></i>
            <span class="it"><svg class="i"><use href="#arc"/></svg>三点辅轴</span><i class="caret"></i>
            <span class="it"><svg class="i"><use href="#brush"/></svg>删除辅轴</span>
            <span class="it"><svg class="i"><use href="#dim"/></svg>尺寸标注</span><i class="caret"></i>
          </div>
        </div>
        <div class="rrow r3">
          <div class="bar">
            <b class="grip"></b>
            <span class="it pressed"><svg class="i"><use href="#arrow"/></svg>选择</span><i class="caret"></i><b class="sep"></b>
            <span class="it pt"><svg class="i"><use href="#xpt"/></svg>点</span>
            <span class="it rp"><svg class="i"><use href="#rotpt"/></svg>旋转点</span>
          </div>
          <div class="bar">
            <b class="grip"></b>
            <span class="it"><svg class="i"><use href="#locate"/></svg>定位CAD图</span>
            <span class="it"><svg class="i"><use href="#clear"/></svg>清除CAD图</span>
            <span class="it"><svg class="i"><use href="#ratio"/></svg>设置比例</span>
            <span class="it"><svg class="i"><use href="#swap"/></svg>批量替换</span>
            <span class="it"><svg class="i"><use href="#restore"/></svg>还原CAD图元</span>
            <span class="it"><svg class="i"><use href="#draw"/></svg>补画CAD线</span><b class="sep"></b>
            <span class="it"><svg class="i"><use href="#editcad"/></svg>修改CAD标注</span>
            <span class="it"><svg class="i"><use href="#pic"/></svg>图片管理</span><i class="caret tight"></i>
          </div>
          <div class="bar stub"><b class="grip"></b></div>
        </div>
        <div class="rrow r4">
          <div class="bar">
            <span class="it"><svg class="i"><use href="#phi"/></svg>转换符号</span>
          </div>
          <div class="bar">
            <b class="grip"></b>
            <span class="it"><svg class="i"><use href="#edge"/></svg>提取柱边线</span>
            <span class="it"><svg class="i"><use href="#mark"/></svg>提取柱标识</span>
            <span class="it"><svg class="i"><use href="#bar"/></svg>提取钢筋线</span>
            <span class="it"><svg class="i"><use href="#detail"/></svg>识别柱大样</span><i class="caret tight"></i>
            <span class="it"><svg class="i"><use href="#check"/></svg>柱大样校核</span>
          </div>
          <div class="bar">
            <b class="grip"></b>
            <span class="it pressed"><svg class="i"><use href="#layers"/></svg>图层设置</span><b class="sep"></b>
            <span class="it"><svg class="i"><use href="#cad"/></svg>显示指定图层</span>
            <span class="it"><svg class="i"><use href="#cad"/></svg>隐藏指定图层</span><b class="sep"></b>
            <span class="it"><svg class="i"><use href="#cadsel"/></svg>选择同图层CAD图元</span>
            <span class="it"><svg class="i"><use href="#cadcol"/></svg>选择同颜色CAD图元</span>
          </div>
        </div>
      </div>

      <div class="canvas">
        <svg class="cad" viewBox="327 160 1212 595" width="1212" height="595">
          <defs>
            <g id="lshape" class="crisp">
              <path class="yl" d="M347.500 174.500H450.500V212.500H385.500V268.500H347.500Z"/>
              <path class="rd" d="M351.500 178.500H447.500V208.500H382.500V264.500H351.500ZM382.500 178.500V208.500M351.500 208.500H382.500M409.500 178.500V208.500M351.500 240.500H382.500M417.500 180V189M417.500 198V208M353 233.500H362M371 233.500H380"/>
              <path class="rd thin" d="M370 184l5-5M376 189l5-5M436 184l5-5M441 189l5-5"/>
              <g class="rd">
                <circle cx="355" cy="182" r="1.800"/><circle cx="378" cy="182" r="1.800"/><circle cx="355" cy="205" r="1.800"/><circle cx="378" cy="205" r="1.800"/><circle cx="413" cy="182" r="1.800"/><circle cx="443" cy="182" r="1.800"/><circle cx="413" cy="205" r="1.800"/><circle cx="443" cy="205" r="1.800"/><circle cx="355" cy="237" r="1.800"/><circle cx="378" cy="237" r="1.800"/><circle cx="355" cy="261" r="1.800"/><circle cx="378" cy="261" r="1.800"/>
              </g>
            </g>
          </defs>
          <path class="gn2" d="M330 175h4M330 212h4M330 268h4M347 160v1M450 160v1M797 160v1M836 160v1M873 160v1"/>
          <use href="#lshape"/>
          <use href="#lshape" x="451"/>
          <path class="gn2" d="M756 169V274M751 174.500H785M751 212H785M751 268H785"/>
          <text class="dim" transform="translate(742 195) rotate(-90)" text-anchor="middle">200</text>
          <text class="dim" transform="translate(742 242) rotate(-90)" text-anchor="middle">300</text>

          <g class="crisp">
            <path class="yl" d="M1216.500 186.500H1289.500V261.500H1216.500Z"/>
            <path class="rd" d="M1219.500 190.500H1286.500V257.500H1219.500Z"/>
            <path class="rd diag" d="M1253 192L1285 223 1253 256 1221 223Z"/>
            <path class="rd thin" d="M1249.500 195v7M1257.500 195v7M1277 199l5-5"/>
            <circle class="rd" cx="1223" cy="193" r="1.800"/><circle class="rd" cx="1283" cy="193" r="1.800"/><circle class="rd" cx="1223" cy="254" r="1.800"/><circle class="rd" cx="1283" cy="254" r="1.800"/><circle class="rd" cx="1253" cy="254" r="1.800"/><circle class="rd" cx="1253" cy="193" r="1.800"/><circle class="rd" cx="1222" cy="223" r="1.800"/><circle class="rd" cx="1284" cy="223" r="1.800"/>
          </g>
          <path class="gn2" d="M1168 181V267M1163 186H1202M1163 261H1202M1216 276V320M1289 276V320M1210 318H1295"/>
          <text class="dim" transform="translate(1154 224) rotate(-90)" text-anchor="middle">400</text>
          <text class="dim" x="1251" y="304" text-anchor="middle">400</text>

          <text class="lbl big" x="327" y="465">L(KZ1a)</text>
          <text class="lbl" x="408" y="520">-0.400~4</text>
          <text class="lbl" x="327" y="577">.2C16</text>
          <text class="lbl" x="408" y="633">C8@100</text>
          <text class="lbl" x="1086" y="521">基础顶~-1.130</text>
          <text class="lbl" x="1315" y="521">-1.130~2.800</text>
          <text class="lbl" x="1233" y="577">8C16</text>
          <text class="lbl" x="1105" y="633">C8@100</text>
          <text class="lbl" x="1318" y="633">C8@100/200</text>
          <text class="kz" x="1229" y="465">KZ3</text>

          <path class="ax-g" d="M380 725V688H378L381 679V676H383V679L386 688H384V725Z"/>
          <path class="ax-r" d="M382 723H419V721L431 725 419 729V727H382Z"/>
          <path class="mk-g" d="M391 679l5 4 5-4M396 683v5"/>
          <path class="mk-r" d="M419 704l9 9M428 704l-9 9"/>

          <path class="pill" d="M1490 567H1539V607H1490Z"/>
          <path class="pilld" d="M1498 587H1539"/>
          <circle class="disc" cx="1472" cy="587" r="29"/>
          <path class="arc" stroke="#38c8b0" d="M1472 561.500A25.500 25.500 0 0 1 1497 582"/>
          <path class="arc" stroke="#7cc868" d="M1497 582A25.500 25.500 0 0 1 1486 608"/>
          <path class="arc" stroke="#d8c840" d="M1486 608A25.500 25.500 0 0 1 1453 604"/>
          <path class="arc" stroke="#e08040" d="M1453 604A25.500 25.500 0 0 1 1447 580"/>
          <text class="pct" x="1455" y="596">79</text>
          <text class="pctp" x="1482" y="596">%</text>
          <path class="sp-b" d="M1507.500 572l4 4h-2.500v4h-3v-4H1504z"/>
          <path class="sp-g" d="M1507.500 601l4-4h-2.500v-4h-3v4H1504z"/>
          <text class="spd" x="1521" y="582">1.1M</text>
          <text class="spd" x="1520" y="602">0.2M</text>
        </svg>
      </div>
    </section>
  </main>

  <div class="dialog">
    <div class="dtitle">
      <svg class="i"><use href="#app"/></svg>
      <span class="dcap">柱大样校核，双击可跟踪到构件位置</span>
      <div class="wctl"><span class="w-min"><b></b></span><span class="w-max"><b></b></span><span class="w-close">✕</span></div>
    </div>
    <div class="dbody">
      <div class="dtop">
        <div class="dlist">
          <div class="lhead"><span>构件名称</span><span>所属楼层</span><span>问题描述</span></div>
          <div class="lrows">
            <div class="li"><span>YBZ5a</span><span>首层</span><span>未使用的柱大样名称</span></div>
            <div class="li"><span>YBZ6</span><span>首层</span><span>未使用的柱大样名称</span></div>
            <div class="li"><span>YBZ7</span><span>首层</span><span>未使用的柱大样名称</span></div>
            <div class="li"><span>YBZ8</span><span>首层</span><span>未使用的柱大样名称</span></div>
            <div class="li"><span>YBZ4</span><span>首层</span><span>未使用的柱大样名称</span></div>
            <div class="li"><span>YBZ5</span><span>首层</span><span>未使用的柱大样名称</span></div>
            <div class="li"><span>YBZ3</span><span>首层</span><span>未使用的柱大样名称</span></div>
            <div class="li"><span>YBZ2</span><span>首层</span><span>未使用的柱大样名称</span></div>
            <div class="li"><span>YBZ1(YB…</span><span>首层</span><span>未使用的柱大样名称</span></div>
            <div class="li selrow"><span>KZ3</span><span>首层</span><span>未使用的柱大样名称</span></div>
            <div class="li"><span>KZ2</span><span>首层</span><span>未使用的柱大样名称</span></div>
            <div class="li"><span>KZ1(KZ1a)</span><span>首层</span><span>未使用的柱大样名称</span></div>
          </div>
          <div class="lscroll"><i class="left"></i><b class="lthumb">⦀</b><i class="right"></i></div>
        </div>
        <fieldset class="checks">
          <legend>校核内容</legend>
          <label class="ck"><i class="cb">✓</i>尺寸标识缺失</label>
          <label class="ck"><i class="cb">✓</i>纵筋信息缺失</label>
          <label class="ck"><i class="cb">✓</i>箍筋信息缺失</label>
          <label class="ck"><i class="cb">✓</i>名称不匹配</label>
          <label class="ck"><i class="cb">✓</i>未使用的柱大样标识</label>
        </fieldset>
      </div>
      <fieldset class="tips">
        <legend>温馨提示</legend>
        <p>三种方法快速检查大样识别结果</p>
        <p>1、根据原位生成的大样示意图结果，检查未生成示意图的大样，判断此大样边线是否不封闭，</p>
        <p class="ind">提取或补画边线后再进行识别或手动新建此柱构件；</p>
        <p>2、根据校核窗体提示信息，检查此大样是否存在标识信息不全或不匹配的大样，确定软件识</p>
        <p class="ind">别是否正确；</p>
        <p>3、通过切换构件列表中的柱构件，可以手动对照大样示意图及属性信息检查单个柱构件识别</p>
        <p class="ind">结果是否正确。</p>
      </fieldset>
    </div>
  </div>

  <svg class="ink" viewBox="0 0 1539 755" width="1539" height="755">
    <path d="M1033 463L1042 462 1045 453 1052 433"/>
    <path d="M1052 433Q1048 450 1048.500 460Q1049 470 1051 478Q1053 487 1054.500 496Q1056 505 1059 513Q1062 522 1067 528Q1072 535 1077 541Q1082 547 1089 552Q1097 558 1108 558Q1120 559 1136 556Q1153 553 1170 550Q1187 547 1205 542Q1223 537 1230 531Q1237 525 1243 518Q1250 512 1259 507Q1268 503 1271 495Q1275 487 1272 480Q1270 473 1260 463Q1250 453 1235 438Q1220 423 1206 419Q1193 415 1173 409Q1153 403 1136 402Q1120 401 1106 405Q1093 410 1076 419Q1060 428 1052 440"/>
    <path d="M747.500 567Q760 567 767 567Q774 568 784 566Q795 565 806 563Q817 562 835 555Q853 548 872 540Q892 533 908 530Q925 527 940 525Q956 523 963 522Q971 522 995 514Q1020 507 1030 505Q1040 504 1048 501Q1057 498 1083 492Q1110 487 1120 484Q1130 481 1150 478Q1170 476 1183 473Q1197 470 1223 465"/>
    <path d="M1175 456Q1183 458 1195 458Q1207 458 1223 465Q1210 473 1196 482"/>
    <path d="M746 551Q740 560 737 566Q734 572 738 574Q742 576 749 576Q756 576 763 578Q771 579 784 579"/>
    <path d="M1304 505L1292 478Q1293 473 1305 470Q1317 468 1335 463Q1353 459 1370 457Q1387 455 1397 456Q1407 458 1408 467Q1410 477 1413 486Q1416 495 1419 504Q1422 513 1422 521Q1423 530 1422 538Q1422 547 1419 551Q1417 555 1402 561Q1387 568 1362 572Q1337 577 1327 572Q1317 568 1308 557Q1300 547 1292 532"/>
    <path d="M1203 590L1194 573Q1205 568 1217 562Q1228 552 1240 542Q1251 535 1263 528Q1282 524 1285 527Q1288 530 1289 541Q1290 553 1294 563Q1299 573 1298 577Q1297 581 1287 586Q1277 592 1263 602Q1250 612 1241 612Q1233 613 1221 610Q1210 608 1197 602"/>
  </svg>
</div>
</body>
</html>
```

FILE: styles.css
```css
* { box-sizing: border-box; }
html, body { margin: 0; padding: 0; }
body {
  width: 1539px;
  height: 755px;
  overflow: hidden;
  background: #efefef;
  color: #111;
  font: 12px/16px "Liberation Sans", "Noto Sans CJK SC", sans-serif;
}
.defs { position: absolute; width: 0; height: 0; }
em, .mono { font-style: normal; font-family: "Liberation Mono", "Noto Sans CJK SC", monospace; font-size: 11px; letter-spacing: -.6px; }

.app { position: relative; width: 1539px; height: 755px; overflow: hidden; display: flex; flex-direction: column; }

/* generic parts */
.i { width: 16px; height: 16px; flex: none; display: block; }
.it { display: flex; align-items: center; gap: 4px; white-space: nowrap; flex: none; height: 100%; }
.dis { color: #a9a9a9; }
.caret { display: inline-block; flex: none; width: 0; height: 0; border: 3px solid transparent; border-top: 4px solid #111; border-bottom: 0; }
.caret.tight { margin: 0 -1px 0 -4px; }
.sep { flex: none; display: block; width: 1px; height: 17px; background: #a9b2ab; margin: 0 -1px; }
.tall { height: 24px; }
.more { font: bold 12px/10px "Liberation Sans", sans-serif; flex: none; }
.bar {
  display: flex; align-items: center; gap: 7px; height: 100%; flex: none;
  padding: 0 5px 0 4px; border-radius: 3px;
  background: linear-gradient(#cfe6d3, #e9f0ea);
}
.grip { flex: none; display: block; width: 3px; height: 16px; margin-right: -3px; background: repeating-linear-gradient(#9aa89c 0 2px, transparent 2px 4px); }

/* menu */
.menubar { flex: none; height: 22px; display: flex; gap: 10px; line-height: 11px; white-space: nowrap; overflow: hidden; align-items: flex-start; }
.menubar .first { margin-left: -24px; }
.menubar .mi { height: 11px; gap: 3px; }
.menubar .mi .caret { margin-left: 6px; }
.menubar .qq { width: 17px; height: 17px; margin-top: -5px; }
.hint { margin-left: auto; flex: none; width: 187px; height: 22px; padding-left: 44px; color: #1b7a78; background: linear-gradient(#cfe6d3, #eef0ee); }
.account { flex: none; width: 285px; margin-left: -10px; padding-left: 6px; display: flex; gap: 4px; overflow: hidden; }
.account .i { margin-top: -5px; }
.mail { font-size: 13px; }
.account .caret { margin: 4px 0 0 3px; }
.beans { margin: 0 6px 0 1px; font-size: 12px; }
.account .bell { width: 13px; margin-right: 4px; }
.ask { flex: none; }

/* top toolbar */
.topbar { flex: none; height: 26px; display: flex; }
.quick { flex: none; width: 124px; display: flex; align-items: center; gap: 7px; padding-bottom: 3px; }
.quick .wide { margin-left: -2px; width: 18px; height: 18px; }
.quick .caret { margin-left: -1px; }
.quick .tall { margin: 0; }
.quick .more { margin-left: 21px; margin-top: -10px; }
.top1 { width: 767px; margin-right: 3px; gap: 7px; }
.top1 .sig { gap: 7px; }
.sigma { font: bold 14px/16px "Liberation Serif", serif; width: 11px; margin-left: 2px; }
.push { margin-left: auto; margin-right: 5px; margin-top: -10px; }
.top2 { flex: 1; padding-left: 1px; }
.on2d { padding: 0 0 0 3px; width: 50px; gap: 2px; background: #cbe6ce; margin-right: -4px; }

/* main columns */
.main { flex: 1; min-height: 0; display: flex; margin-top: 3px; }
.nav { flex: none; width: 136px; margin-right: 5px; display: flex; flex-direction: column; padding-top: 1px; }
.draw { flex: none; width: 182px; margin-right: 4px; display: flex; flex-direction: column; padding-top: 1px; }
.work { flex: 1; min-width: 0; display: flex; flex-direction: column; }

.title {
  flex: none; height: 14px; display: flex; align-items: center; gap: 6px;
  padding-right: 3px; font-size: 13px; line-height: 14px;
  border: 1px solid #8f8f8f; border-radius: 2px 2px 0 0;
  overflow: hidden;
}
.title > span { flex: 1; white-space: nowrap; }
.title .cut { margin-left: -6px; }
.tb-i { width: 11px; height: 11px; flex: none; }
.nav .title { border-left: 0; }

.navbtn { flex: none; height: 21px; margin-top: 2px; border-top: 1px solid #a5a5a5; border-bottom: 1px solid #a5a5a5; border-right: 1px solid #a5a5a5; text-align: center; line-height: 20px; padding-right: 27px; background: #f0f0f0; }
.treetool { flex: none; height: 25px; margin-top: 2px; background: linear-gradient(#cfe6d3, #e4efe6); display: flex; padding: 10px 0 0 1px; border-bottom: 1px solid #9a9a9a; }
.d1 { display: block; width: 8px; height: 2px; background: #222; }
.d2 { display: block; width: 8px; height: 3px; background: #1a6a6a; margin-top: 4px; }
.treewrap { flex: 1; min-height: 0; margin-top: 1px; display: flex; border-right: 1px solid #9a9a9a; background: #cbe6ce; }
.tree { flex: 1; min-width: 0; padding-top: 2px; overflow: hidden; }
.fold { height: 16px; display: flex; align-items: center; gap: 5px; margin-left: -3px; white-space: nowrap; }
.leaf {
  height: 16px; display: flex; align-items: center; padding-left: 16px; white-space: nowrap;
  background:
    repeating-linear-gradient(#777 0 1px, transparent 1px 2px) 5px 0 / 1px 100% no-repeat,
    repeating-linear-gradient(90deg, #777 0 1px, transparent 1px 2px) 5px 8px / 12px 1px no-repeat;
}
.leaf:last-child { background-size: 1px 9px, 12px 1px; }
.node { display: flex; align-items: center; gap: 5px; height: 16px; padding-right: 2px; border-radius: 3px; }
.hl .node { background: #e6f0e8; box-shadow: 0 0 0 1px #c9d2ca; }
.newtag { display: flex; align-items: flex-start; gap: 1px; background: #fff; height: 17px; padding: 1px 2px 0 2px; }
.newtag strong { font: bold 8px/9px "Liberation Sans", sans-serif; background: #ffe000; color: #222; padding: 0 1px; }

.vscroll { flex: none; width: 17px; background: #e8e8e8; display: flex; flex-direction: column; align-items: center; border-left: 1px solid #f4f4f4; }
.up { flex: none; margin-top: 6px; width: 0; height: 0; border: 4px solid transparent; border-bottom: 4px solid #444; border-top: 0; }
.down { flex: none; margin-top: 10px; width: 0; height: 0; border: 4px solid transparent; border-top: 4px solid #444; border-bottom: 0; }
.vthumb { flex: none; margin-top: 108px; height: 477px; width: 15px; display: flex; align-items: center; justify-content: center; border: 1px solid #aeaeae; border-radius: 2px; background: linear-gradient(90deg, #fafafa, #dcdcdc 60%, #c4c4c4); }
.vthumb b { display: block; width: 7px; height: 7px; background: repeating-linear-gradient(#666 0 1px, transparent 1px 3px); }

/* drawings panel */
.tabs { flex: none; height: 21px; margin-top: 1px; display: flex; align-items: flex-end; }
.tab { display: block; height: 18px; width: 92px; text-align: center; white-space: nowrap; border: 1px solid #a8a8a8; border-bottom: 0; background: linear-gradient(#f6f6f6, #e0e0e0); line-height: 17px; }
.tab.active { height: 20px; width: 88px; background: #f4f4f4; line-height: 18px; }
.tabbody { flex: none; width: 180px; height: 324px; border: 1px solid #a8a8a8; padding: 1px 2px 0 4px; }
.sheettools { height: 25px; margin: 1px 0 0; display: flex; border: 1px solid #b4b4b4; background: #fff; align-items: stretch; }
.stb { display: flex; align-items: center; justify-content: center; background: #f0f0f0; border-right: 2px solid #b4b4b4; white-space: nowrap; }
.w57 { width: 57px; }
.w11 { width: 13px; }
.more.sm { margin-left: auto; width: 12px; background: #f0f0f0; padding-top: 3px; text-align: center; border-left: 1px solid #b4b4b4; }
.sheet { height: 292px; margin-top: 1px; border: 2px solid #bcbcbc; display: flex; flex-direction: column; background: #cbe6ce; overflow: hidden; }
.shead { flex: none; height: 26px; display: flex; border-bottom: 1px solid #aaa; }
.hc { flex: 1; text-align: center; line-height: 25px; color: #5c0a88; background: linear-gradient(#fcdca4, #f0b058); }
.rh { flex: none; width: 21px; text-align: center; font-family: "Liberation Sans", sans-serif; line-height: 18px; background: linear-gradient(90deg, #fbfbfb, #ececec); border-right: 1px solid #d2d2d2; }
.srow { flex: none; height: 19px; display: flex; border-bottom: 1px solid #b8c8ba; }
.cell { flex: 1; min-width: 0; overflow: hidden; white-space: nowrap; line-height: 18px; display: flex; align-items: center; padding-left: 4px; }
.minus { flex: none; display: block; width: 11px; height: 11px; margin-right: 5px; border: 1px solid #b0b0b0; background: linear-gradient(transparent 4px, #333 4px, #333 5px, transparent 5px) 1px 0 / 7px 100% no-repeat, #f0f0f0; }
.kid { padding-left: 30px; background: linear-gradient(#b8c8ba, #b8c8ba) 8px 0 / 1px 100% no-repeat, linear-gradient(#b8c8ba, #b8c8ba) 8px 9px / 17px 1px no-repeat; }
.yel { background-color: #ffff00; }
.red { background: #ff0000; color: #7d0000; padding-left: 20px; }
.cur .rh { background: #fcd292; color: #5c0a88; }
.sel { background: #4ea54e; border: 3px solid #000; border-right: 0; margin: -1px 0 -2px -1px; padding-left: 2px; z-index: 1; flex: none; width: 152px; }
.sempty { flex: 1; }
.hscroll { flex: none; height: 17px; display: flex; align-items: center; background: #ececec; padding: 0 6px; }
.left { flex: none; width: 0; height: 0; border: 4px solid transparent; border-right: 4px solid #444; border-left: 0; }
.right { flex: none; margin-left: auto; width: 0; height: 0; border: 4px solid transparent; border-left: 4px solid #444; border-right: 0; }
.sthumb { display: block; width: 15px; height: 15px; margin-left: 8px; border: 1px solid #aaa; background: linear-gradient(#f8f8f8, #c8c8c8); border-radius: 2px; }
.t2 { margin-top: 7px; height: 15px; }
.t2 span { margin-left: -1px; }
.layers { flex: 1; margin-top: 1px; background: #cbe6ce; border: 1px solid #a0a0a0; border-bottom: 0; padding: 1px 0 0 12px; }
.lrow { height: 14px; display: flex; align-items: center; white-space: nowrap; }
.tri { flex: none; width: 0; height: 0; border: 3.500px solid transparent; border-left: 4px solid #bbb; border-right: 0; margin-right: 3px; }
.dots { flex: none; display: block; width: 6px; height: 1px; margin-right: 1px; background: repeating-linear-gradient(90deg, #888 0 1px, transparent 1px 2px); }
.lb { flex: none; display: block; width: 12px; height: 12px; margin-right: 3px; border: 1px solid #8a8a8a; background: #ececec; }
.lb.fill { background: linear-gradient(#4aa0d0, #1f6a9c); box-shadow: inset 0 0 0 1px #e6f0f6; }

/* ribbon */
.ribbon { flex: none; height: 109px; display: flex; flex-direction: column; }
.rrow { flex: none; display: flex; gap: 2px; }
.r1 { height: 24px; }
.r2 { height: 25px; margin-top: 3px; }
.r3 { height: 25px; margin-top: 4px; gap: 3px; }
.r4 { height: 24px; margin-top: 2px; gap: 3px; }
.r1 .bar { width: 791px; }
.r1 .caret.tight { margin-right: 1px; }
.combos { width: 567px; gap: 3px; }
.combos .it { margin-left: 4px; }
.combos .sep { margin: 0 2px 0 1px; }
.combos .sep + .it { margin-left: 0; }
.combo { flex: none; display: flex; height: 23px; align-items: center; }
.combo > span { flex: 1; min-width: 0; height: 100%; display: block; background: #cbe6ce; padding-left: 2px; line-height: 22px; overflow: hidden; white-space: nowrap; }
.drop { flex: none; width: 11px; height: 100%; display: flex; align-items: center; justify-content: center; background: #e9f0ea; }
.c46 { width: 57px; margin-left: 2px; }
.c59 { width: 69px; }
.c69 { width: 69px; }
.c58 { width: 70px; }
.clip { width: 48px; }
.r2 .bar:last-child .caret { margin: 0 -1px; }
.pressed { height: 23px; padding: 0 3px 0 5px; gap: 1px; border: 1px solid #4a9ad8; background: #dcecf4; margin-left: -4px; }
.r3 .pressed { padding-right: 2px; margin-left: -3px; }
.r3 .pressed + .caret { margin-left: -4px; }
.r3 .sep { margin: 0; }
.pt { gap: 2px; }
.rp { margin-left: 3px; }
.r4 .pressed { margin-right: -4px; }
.stub { width: 31px; }
.stub .grip { margin-right: 0; }
.r3 .bar:first-child { width: 180px; }
.r4 .bar:first-child { width: 84px; padding-left: 11px; }

/* canvas */
.canvas { flex: 1; min-height: 0; position: relative; background: #000; overflow: hidden; }
.cad { position: absolute; left: 0; top: 0; display: block; }
.cad text { font-family: "Liberation Sans", "Noto Sans CJK SC", sans-serif; }
.crisp { shape-rendering: crispEdges; }
.crisp circle, .crisp .diag, .crisp .thin { shape-rendering: auto; }
.yl { fill: none; stroke: #ffff00; stroke-width: 1; }
.rd { fill: none; stroke: #ff0000; stroke-width: 1; }
.gn2 { fill: none; stroke: #00ff00; stroke-width: 2; shape-rendering: crispEdges; }
.dim { fill: #00d000; font-size: 14px; }
.lbl { fill: #00d000; font-size: 14px; }
.big { font-size: 18.500px; }
.kz { fill: #0000e8; font-size: 18px; }
.ax-g { fill: #00ff00; shape-rendering: crispEdges; }
.ax-r { fill: #ff0000; shape-rendering: crispEdges; }
.mk-g { fill: none; stroke: #00e000; stroke-width: 1.200; }
.mk-r { fill: none; stroke: #ff1010; stroke-width: 1.200; }
.pill { fill: #191c24; }
.pilld { stroke: #2c303c; }
.disc { fill: #2c3140; stroke: #20232c; stroke-width: 1; }
.arc { fill: none; stroke-width: 1.500; }
.cad .pct { fill: #e4e4e8; font-family: Roboto, sans-serif; font-weight: 300; font-size: 25px; }
.cad .pctp { fill: #e4e4e8; font-size: 10px; }
.sp-b { fill: #2a98e0; }
.sp-g { fill: #20a030; }
.spd { fill: #cfe2ee; font-size: 13px; }

/* dialog */
.dialog { position: absolute; left: 465px; top: 345px; width: 548px; height: 430px; display: flex; flex-direction: column; padding: 0 5px; border: 1px solid #555; border-radius: 5px 5px 0 0; background: #2c2c2c; }
.dtitle { flex: none; height: 27px; display: flex; align-items: center; gap: 4px; padding: 0 0 0 3px; }
.dcap { color: #0c0c0c; text-shadow: 0 0 4px #8a8a8a, 0 0 8px #8a8a8a; white-space: nowrap; }
.wctl { margin: -9px -4px 0 auto; height: 18px; display: flex; border: 1px solid #777; border-top: 0; border-radius: 0 0 4px 4px; }
.wctl span { display: flex; align-items: center; justify-content: center; height: 100%; border-right: 1px solid #777; color: #fff; }
.w-min { width: 29px; }
.w-min b { display: block; width: 11px; height: 3px; margin-top: 4px; background: #fff; }
.w-max { width: 28px; }
.w-max b { display: block; width: 11px; height: 9px; border: 2px solid #8a8a8a; margin-top: -2px; }
.w-close { width: 46px; border-right: 0 !important; font: bold 12px/12px "DejaVu Sans", sans-serif; padding-bottom: 3px; }
.dbody { flex: 1; min-height: 0; background: #f0f0f0; border: 1px solid #fff; padding: 2px 0 0 1px; }
.dtop { height: 260px; display: flex; border-bottom: 1px solid #b4b4b4; }
.dlist { flex: none; width: 361px; height: 256px; display: flex; flex-direction: column; border: 1px solid #a8a8a8; border-top: 0; background: #fff; }
.lhead, .li { display: grid; grid-template-columns: 65px 66px 1fr; padding-left: 6px; white-space: nowrap; }
.lhead { flex: none; height: 26px; line-height: 28px; border-bottom: 1px solid #dcdcdc; }
.lhead span { border-right: 1px solid #ececec; margin-right: 4px; }
.lhead span:last-child { border-right: 0; }
.lrows { flex: 1; min-height: 0; background: #cbe6ce; padding-top: 1px; }
.li { height: 17px; line-height: 16px; }
.selrow { margin-left: 2px; padding-left: 4px; background: linear-gradient(#eaf3fc, #cfe2f6); box-shadow: inset 0 0 0 1px #8fb8e2; border-radius: 2px; }
.lscroll { flex: none; height: 18px; display: flex; align-items: center; padding: 0 7px 0 6px; background: #efefef; border-top: 1px solid #ddd; }
.lthumb { display: block; flex: none; width: 316px; height: 15px; margin-left: 9px; font: 9px/13px "DejaVu Sans", sans-serif; text-align: center; border: 1px solid #a0a0a0; border-radius: 2px; background: linear-gradient(#f8f8f8, #c4c4c4); color: #555; }
fieldset { margin: 0; min-width: 0; padding: 0; border: 1px solid #dadada; border-radius: 2px; }
legend { padding: 0; margin-left: 2px; line-height: 13px; }
.checks { flex: none; width: 160px; height: 259px; margin: 0 0 0 7px; padding: 37px 0 0 18px; display: flex; flex-direction: column; }
.checks legend { margin-left: -15px; }
.ck { display: flex; align-items: center; gap: 4px; height: 14px; white-space: nowrap; }
.ck + .ck { margin-top: 23px; }
.ck:nth-of-type(4), .ck:nth-of-type(5) { margin-top: 20px; }
.cb { flex: none; display: block; width: 12px; height: 12px; border: 1px solid #8e8f8f; background: #e8eef4; color: #2a3a90; font: bold 10px/10px "DejaVu Sans", sans-serif; text-align: center; }
.tips { margin: 3px 0 0 0; width: 534px; height: 130px; padding: 1px 0 0 3px; border-right: 0; }
.tips legend { margin-left: 3px; line-height: 15px; }
.tips p { margin: 0; line-height: 13.300px; white-space: nowrap; }
.tips .ind { padding-left: 9px; }
.ink { position: absolute; left: 0; top: 0; pointer-events: none; }
.ink path { fill: none; stroke: #f00; stroke-width: 1.800; stroke-linejoin: round; stroke-linecap: round; }
```
